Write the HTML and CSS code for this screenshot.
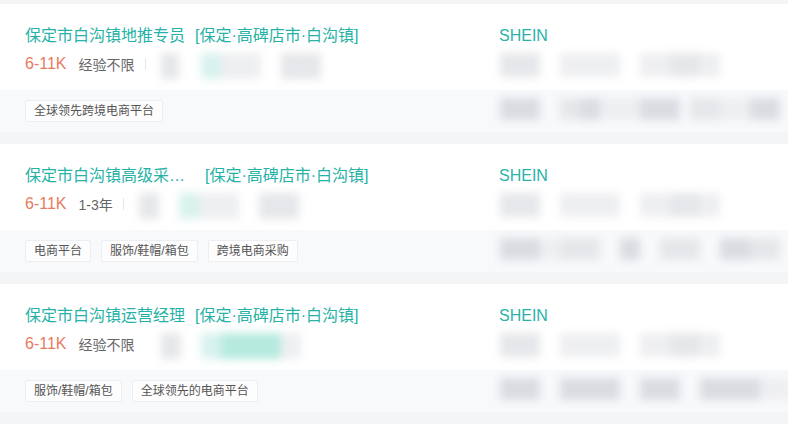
FILE: index.html
```html
<!DOCTYPE html>
<html lang="zh-CN">
<head>
<meta charset="utf-8">
<title>职位列表</title>
<link rel="stylesheet" href="styles.css">
</head>
<body>
<div class="list">
  <div class="card">
    <div class="main">
      <div class="left">
        <div class="title-row"><span class="name">保定市白沟镇地推专员</span><span class="area">[保定·高碑店市·白沟镇]</span></div>
        <div class="info-row">
          <span class="salary">6-11K</span><span class="exp">经验不限</span><span class="sep"></span>
          <span class="blur info-blur"><i class="g w18"></i><i class="sp w22"></i><i class="t w20"></i><i class="gl w40"></i><i class="sp w20"></i><i class="g w40"></i></span>
        </div>
      </div>
      <div class="right">
        <div class="company">SHEIN</div>
        <div class="blur co-blur"><i class="g w40"></i><i class="sp w20"></i><i class="gl w60"></i><i class="sp w20"></i><i class="gl w30"></i><i class="g w30"></i><i class="gl w20"></i></div>
      </div>
    </div>
    <div class="foot">
      <div class="tags"><span class="tag">全球领先跨境电商平台</span></div>
      <div class="blur foot-blur"><i class="gd w40"></i><i class="sp w20"></i><i class="g w20"></i><i class="gd w20"></i><i class="gl w40"></i><i class="gd w40"></i><i class="sp w10"></i><i class="g w30"></i><i class="gl w30"></i><i class="gd w30"></i></div>
    </div>
  </div>

  <div class="card">
    <div class="main">
      <div class="left">
        <div class="title-row"><span class="name">保定市白沟镇高级采购专员</span><span class="area">[保定·高碑店市·白沟镇]</span></div>
        <div class="info-row">
          <span class="salary">6-11K</span><span class="exp">1-3年</span><span class="sep"></span>
          <span class="blur info-blur"><i class="g w20"></i><i class="sp w20"></i><i class="t w20"></i><i class="gl w40"></i><i class="sp w20"></i><i class="g w40"></i></span>
        </div>
      </div>
      <div class="right">
        <div class="company">SHEIN</div>
        <div class="blur co-blur"><i class="g w40"></i><i class="sp w20"></i><i class="gl w60"></i><i class="sp w20"></i><i class="gl w30"></i><i class="g w30"></i><i class="gl w20"></i></div>
      </div>
    </div>
    <div class="foot">
      <div class="tags"><span class="tag">电商平台</span><span class="tag">服饰/鞋帽/箱包</span><span class="tag">跨境电商采购</span></div>
      <div class="blur foot-blur"><i class="gd w40"></i><i class="gl w20"></i><i class="g w40"></i><i class="sp w20"></i><i class="gd w20"></i><i class="sp w20"></i><i class="g w40"></i><i class="sp w20"></i><i class="gd w30"></i><i class="g w30"></i></div>
    </div>
  </div>

  <div class="card">
    <div class="main">
      <div class="left">
        <div class="title-row"><span class="name">保定市白沟镇运营经理</span><span class="area">[保定·高碑店市·白沟镇]</span></div>
        <div class="info-row">
          <span class="salary">6-11K</span><span class="exp">经验不限</span>
          <span class="blur info-blur wide"><i class="g w20"></i><i class="sp w20"></i><i class="t w20"></i><i class="tt w60"></i><i class="gl w20"></i></span>
        </div>
      </div>
      <div class="right">
        <div class="company">SHEIN</div>
        <div class="blur co-blur"><i class="g w40"></i><i class="sp w20"></i><i class="gl w60"></i><i class="sp w20"></i><i class="gl w30"></i><i class="g w30"></i><i class="gl w20"></i></div>
      </div>
    </div>
    <div class="foot">
      <div class="tags"><span class="tag">服饰/鞋帽/箱包</span><span class="tag">全球领先的电商平台</span></div>
      <div class="blur foot-blur"><i class="gd w40"></i><i class="sp w20"></i><i class="gd w60"></i><i class="sp w20"></i><i class="gd w40"></i><i class="sp w20"></i><i class="gd w60"></i><i class="gl w30"></i></div>
    </div>
  </div>

  <div class="card">
    <div class="main"></div>
  </div>
</div>
</body>
</html>
```

FILE: styles.css
```css
* { box-sizing: border-box; }

body {
  margin: 0;
  padding-top: 4px;
  background: #f4f5f7;
  font-family: "Liberation Sans", "Noto Sans CJK SC", Arial, sans-serif;
  overflow: hidden;
}

.card {
  background: #fff;
  margin-bottom: 12px;
}

.main {
  display: grid;
  grid-template-columns: 474px 1fr;
  padding: 21px 0 0 25px;
  height: 86px;
  overflow: visible;
}

.title-row {
  display: flex;
  height: 22px;
  line-height: 22px;
  font-size: 16px;
  color: #26b2a7;
  white-space: nowrap;
}

.name {
  max-width: 170px;
  overflow: hidden;
  text-overflow: ellipsis;
  margin-right: 10px;
}

.info-row {
  display: flex;
  align-items: center;
  height: 22px;
  margin-top: 6px;
  white-space: nowrap;
}

.salary {
  font-size: 16px;
  color: #e77b60;
}

.exp {
  font-size: 14px;
  color: #666;
  margin-left: 12px;
}

.sep {
  width: 1px;
  height: 12px;
  background: #e4e4e4;
  margin-left: 10px;
}

.blur {
  display: flex;
  filter: blur(4px);
}

.blur i {
  display: block;
  height: 100%;
}

.info-blur {
  height: 26px;
  margin-top: 4px;
  margin-left: 15px;
}

.info-blur.wide {
  margin-left: 26px;
}

.company {
  height: 22px;
  line-height: 22px;
  font-size: 16px;
  color: #2ab3a8;
}

.co-blur {
  height: 24px;
  margin-top: 6px;
  margin-left: 1px;
}

.foot {
  display: grid;
  grid-template-columns: 474px 1fr;
  align-items: center;
  height: 42px;
  padding-left: 25px;
  background: #f8f9fb;
}

.tags {
  display: flex;
  gap: 10px;
}

.tag {
  display: inline-block;
  font-size: 12px;
  line-height: 20px;
  padding: 0 8px;
  color: #555;
  background: #fdfdfd;
  border: 1px solid #eceef2;
  border-radius: 2px;
  white-space: nowrap;
}

.foot-blur {
  height: 22px;
  margin-top: -4px;
  margin-left: 1px;
}

.g { background: #e6e7ea; }
.gl { background: #eeeff1; }
.gd { background: #dadce2; }
.t { background: #d8f2ee; }
.tt { background: #b6eadf; }
.sp { background: transparent; }

.w10 { width: 10px; flex: none; }
.w18 { width: 18px; flex: none; }
.w20 { width: 20px; flex: none; }
.w22 { width: 22px; flex: none; }
.w30 { width: 30px; flex: none; }
.w40 { width: 40px; flex: none; }
.w60 { width: 60px; flex: none; }
```
